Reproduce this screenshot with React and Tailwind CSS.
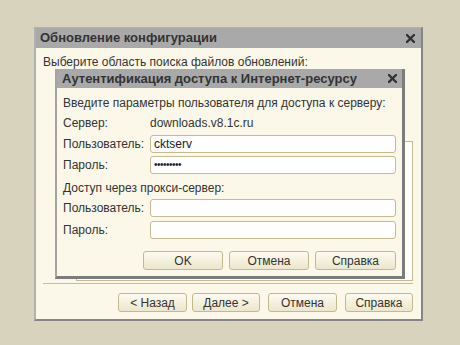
import React from "react";

function CloseX({ size = 9 }) {
  return (
    <svg width={size} height={size} viewBox="0 0 9 9" className="block">
      <path d="M1 1 L8 8 M8 1 L1 8" stroke="#333333" strokeWidth="2.3" strokeLinecap="square" />
    </svg>
  );
}

function Btn({ children, w }) {
  return (
    <div
      className={`${w} h-[19px] flex items-center justify-center rounded-[3px] border border-[#c4b88e] bg-gradient-to-b from-[#fdfbf1] to-[#ece6cb] text-[12px] text-[#333]`}
    >
      {children}
    </div>
  );
}

function Field({ children }) {
  return (
    <div className="w-[246px] h-[18px] flex items-center rounded-[3px] border border-[#c6ba92] bg-white pl-[3px] text-[12px] text-[#222]">
      {children}
    </div>
  );
}

export default function App() {
  return (
    <div className="relative w-[460px] h-[345px] overflow-hidden bg-[#d8d3bd] pt-[27px] pl-[34px] font-['Liberation_Sans',Arial,sans-serif] text-[12px] text-[#333] leading-[14px]">
      {/* Outer window */}
      <div className="w-[389px] h-[294px] flex flex-col border-t border-l-2 border-r-2 border-b-2 border-t-[#b0b0b0] border-l-[#b0b0b0] border-r-[#858585] border-b-[#858585] bg-[#fbf8ea]">
        <div className="h-[20px] shrink-0 flex items-center justify-between bg-[#a9a9a9] pl-[4px] pr-[6px]">
          <span className="text-[13px] font-bold text-[#333]">Обновление конфигурации</span>
          <CloseX />
        </div>
        <div className="pl-[7px] mt-[7px] h-[14px]">Выберите область поиска файлов обновлений:</div>
        <div className="ml-[40px] mr-[8px] mt-[72px] h-[140px] border border-[#c6ba92] bg-white"></div>
        <div className="ml-[7px] mr-[8px] mt-[2px] h-px bg-[#c4bda2]"></div>
        <div className="mt-[9px] pr-[8px] flex justify-end">
          <Btn w="w-[69px]">&lt; Назад</Btn>
          <div className="ml-[5px]">
            <Btn w="w-[68px]">Далее &gt;</Btn>
          </div>
          <div className="ml-[8px]">
            <Btn w="w-[69px]">Отмена</Btn>
          </div>
          <div className="ml-[8px]">
            <Btn w="w-[68px]">Справка</Btn>
          </div>
        </div>
      </div>

      {/* Inner dialog */}
      <div className="absolute left-[55px] top-[69px] w-[350px] h-[210px] flex flex-col border-l-2 border-r-[3px] border-b-[3px] border-l-[#a4a4a4] border-r-[#7c7c7c] border-b-[#7c7c7c] bg-[#fbf8ea]">
        <div className="h-[19px] shrink-0 flex items-center justify-between bg-[#a9a9a9] pl-[5px] pr-[5px]">
          <span className="text-[13px] font-bold text-[#333]">Аутентификация доступа к Интернет-ресурсу</span>
          <CloseX />
        </div>
        <div className="pl-[6px] pr-[6px] flex flex-col">
          <div className="mt-[8px] h-[14px]">Введите параметры пользователя для доступа к серверу:</div>
          <div className="mt-[6px] h-[14px] flex">
            <span className="w-[87px]">Сервер:</span>
            <span>downloads.v8.1c.ru</span>
          </div>
          <div className="mt-[5px] flex items-center">
            <span className="w-[87px]">Пользователь:</span>
            <Field>cktserv</Field>
          </div>
          <div className="mt-[3px] flex items-center">
            <span className="w-[87px]">Пароль:</span>
            <Field>
              <span className="text-[10px] tracking-[-0.5px] text-[#1c2040] leading-[10px]">•••••••••</span>
            </Field>
          </div>
          <div className="mt-[7px] h-[14px]">Доступ через прокси-сервер:</div>
          <div className="mt-[4px] flex items-center">
            <span className="w-[87px]">Пользователь:</span>
            <Field></Field>
          </div>
          <div className="mt-[4px] flex items-center">
            <span className="w-[87px]">Пароль:</span>
            <Field></Field>
          </div>
          <div className="mt-[12px] flex justify-end gap-[6px]">
            <Btn w="w-[80px]">OK</Btn>
            <Btn w="w-[80px]">Отмена</Btn>
            <Btn w="w-[81px]">Справка</Btn>
          </div>
        </div>
      </div>
    </div>
  );
}
